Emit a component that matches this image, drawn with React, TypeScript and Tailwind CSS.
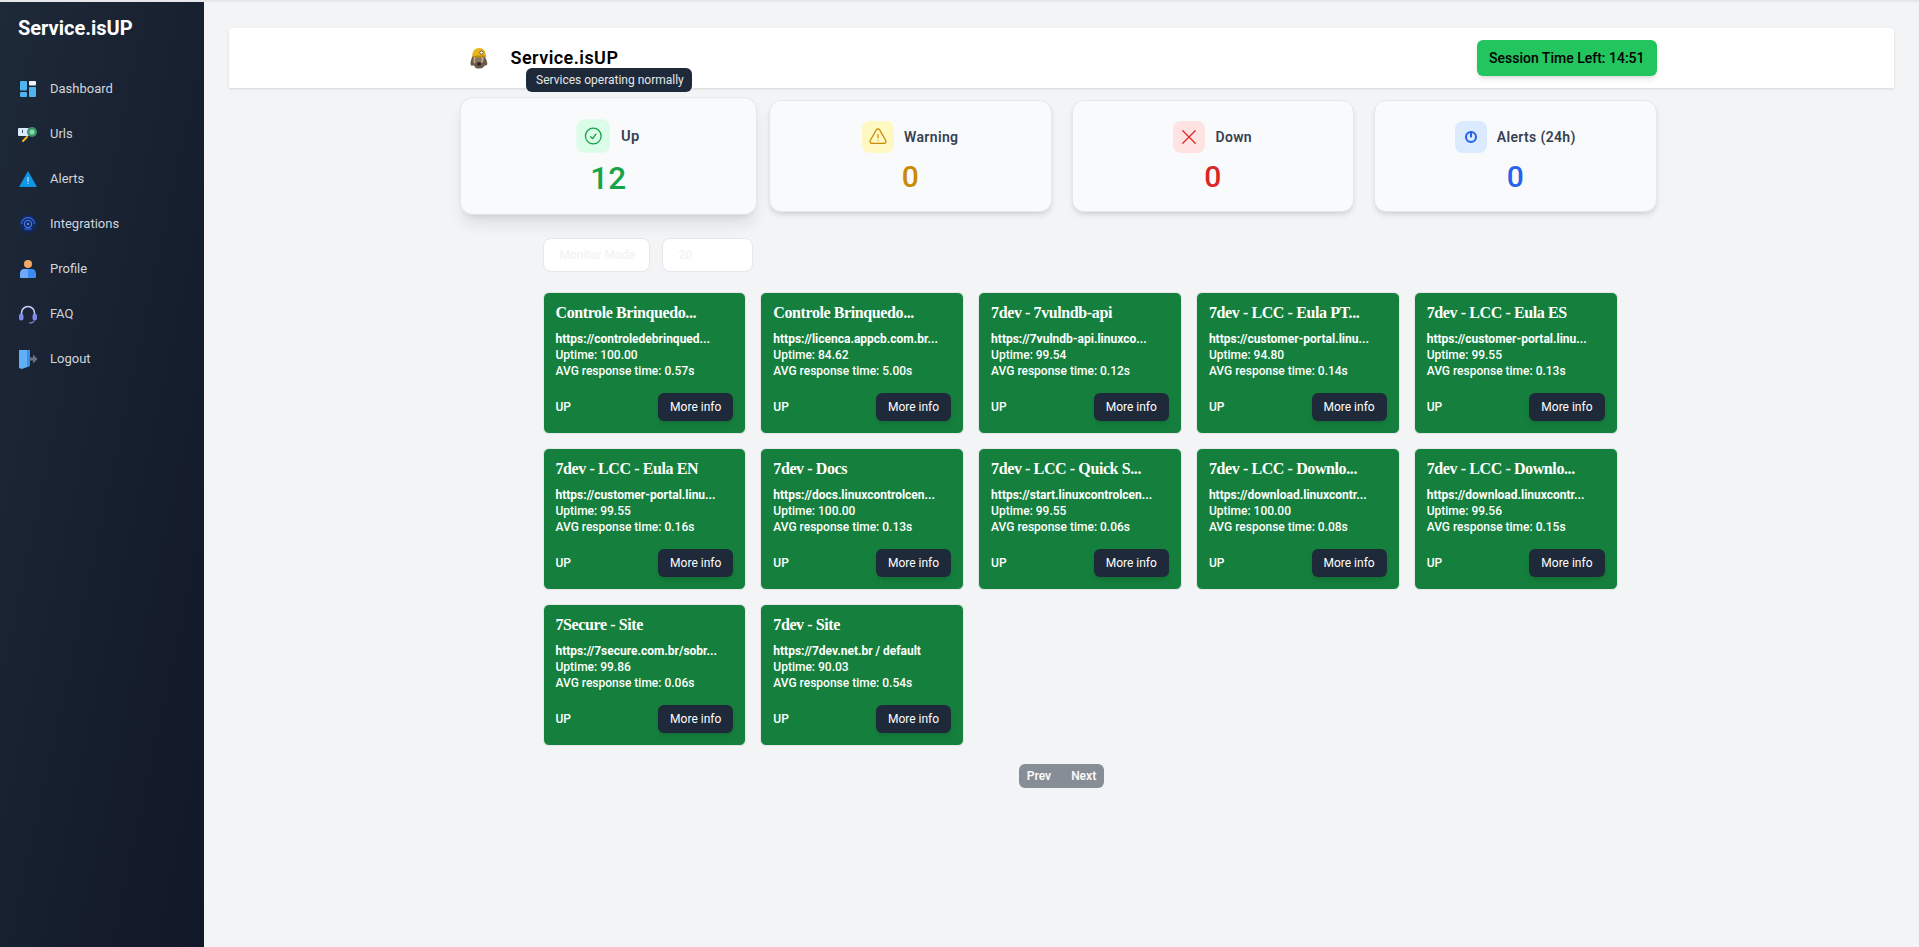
const navItems = [
  { label: "Dashboard", icon: <DashboardIcon /> },
  { label: "Urls", icon: <UrlsIcon /> },
  { label: "Alerts", icon: <AlertsIcon /> },
  { label: "Integrations", icon: <IntegrationsIcon /> },
  { label: "Profile", icon: <ProfileIcon /> },
  { label: "FAQ", icon: <FaqIcon /> },
  { label: "Logout", icon: <LogoutIcon /> },
];

const services = [
  { name: "Controle Brinquedo...", url: "https://controledebrinqued...", uptime: "100.00", avg: "0.57s" },
  { name: "Controle Brinquedo...", url: "https://licenca.appcb.com.br...", uptime: "84.62", avg: "5.00s" },
  { name: "7dev - 7vulndb-api", url: "https://7vulndb-api.linuxco...", uptime: "99.54", avg: "0.12s" },
  { name: "7dev - LCC - Eula PT...", url: "https://customer-portal.linu...", uptime: "94.80", avg: "0.14s" },
  { name: "7dev - LCC - Eula ES", url: "https://customer-portal.linu...", uptime: "99.55", avg: "0.13s" },
  { name: "7dev - LCC - Eula EN", url: "https://customer-portal.linu...", uptime: "99.55", avg: "0.16s" },
  { name: "7dev - Docs", url: "https://docs.linuxcontrolcen...", uptime: "100.00", avg: "0.13s" },
  { name: "7dev - LCC - Quick S...", url: "https://start.linuxcontrolcen...", uptime: "99.55", avg: "0.06s" },
  { name: "7dev - LCC - Downlo...", url: "https://download.linuxcontr...", uptime: "100.00", avg: "0.08s" },
  { name: "7dev - LCC - Downlo...", url: "https://download.linuxcontr...", uptime: "99.56", avg: "0.15s" },
  { name: "7Secure - Site", url: "https://7secure.com.br/sobr...", uptime: "99.86", avg: "0.06s" },
  { name: "7dev - Site", url: "https://7dev.net.br / default", uptime: "90.03", avg: "0.54s" },
];

function DashboardIcon() {
  return (
    <svg viewBox="0 0 20 20" className="w-5 h-5">
      <rect x="2" y="2" width="7" height="9.5" rx="1" fill="#4fb3f0" />
      <rect x="2" y="13" width="7" height="5" rx="1" fill="#4fb3f0" />
      <rect x="11" y="2" width="7" height="4.5" rx="1" fill="#f1f5f9" />
      <rect x="11" y="8" width="7" height="10" rx="1" fill="#4fb3f0" />
    </svg>
  );
}

function UrlsIcon() {
  return (
    <svg viewBox="0 0 20 20" className="w-5 h-5">
      <rect x="0" y="4" width="11" height="8" rx="1" fill="#dbeafe" />
      <rect x="4" y="6" width="1" height="3" fill="#475569" />
      <path d="M9 13l-4 4" stroke="#f5b82e" strokeWidth="2" strokeLinecap="round" />
      <circle cx="14" cy="8" r="5" fill="#3f8f6b" />
      <circle cx="14" cy="8" r="2.6" fill="#7ee0a8" />
    </svg>
  );
}

function AlertsIcon() {
  return (
    <svg viewBox="0 0 20 20" className="w-5 h-5">
      <path d="M10 2L18.5 17a.6.6 0 01-.5 1H2a.6.6 0 01-.5-1z" fill="#0f94e6" />
      <rect x="9.5" y="8" width="1" height="5" fill="#e0f2fe" />
      <rect x="9.5" y="14" width="1" height="1" fill="#e0f2fe" />
    </svg>
  );
}

function IntegrationsIcon() {
  return (
    <svg viewBox="0 0 20 20" className="w-5 h-5" fill="none">
      <circle cx="10" cy="10" r="9" fill="#13295c" />
      <path d="M3.5 10a6.5 6.5 0 0113 0" stroke="#2f62d8" strokeWidth="1.4" />
      <circle cx="10" cy="10" r="3.6" stroke="#3f78ee" strokeWidth="1.3" />
      <path d="M6.5 15h7" stroke="#2f62d8" strokeWidth="1.4" />
      <circle cx="10" cy="10" r="1.2" fill="#5b8ff5" />
    </svg>
  );
}

function ProfileIcon() {
  return (
    <svg viewBox="0 0 20 20" className="w-5 h-5">
      <circle cx="10" cy="5" r="4" fill="#f4a96b" />
      <path d="M2 18v-3.5C2 12 4 10 6 10h8c2 0 4 2 4 4.5V18a1 1 0 01-1 1H3a1 1 0 01-1-1z" fill="#3b8bf5" />
      <path d="M2 18v-3.5C2 12 4 10 6 10h4v9H3a1 1 0 01-1-1z" fill="#6ea8f7" />
    </svg>
  );
}

function FaqIcon() {
  return (
    <svg viewBox="0 0 20 20" className="w-5 h-5" fill="none">
      <path d="M3.5 11V9a6.5 6.5 0 0113 0v2" stroke="#c7d2fe" strokeWidth="1.5" />
      <rect x="1" y="9.5" width="4.5" height="7" rx="2.2" fill="#7c8ce8" />
      <rect x="14.5" y="9.5" width="4.5" height="7" rx="2.2" fill="#7c8ce8" />
      <path d="M16 16.5c0 1.5-2.5 2.5-5 2.5" stroke="#7c8ce8" strokeWidth="1.2" />
    </svg>
  );
}

function LogoutIcon() {
  return (
    <svg viewBox="0 0 20 20" className="w-5 h-5">
      <path d="M1 1h11v16l-8 3-3-1z" fill="#5fb0f7" />
      <path d="M9 1h3v16H9z" fill="#3f8fe8" />
      <path d="M11 8.5h4V5.5l4.5 4.5-4.5 4.5v-3h-4z" fill="#64748b" />
    </svg>
  );
}

function DogLogo() {
  return (
    <svg viewBox="0 0 24 26" className="w-5 h-6">
      <path d="M4 11c-1 4-3 7-2 10 1 2 3 1 4 1l2 3c3 1 7 1 9-1l2-2c1 0 3 0 3-2 0-3-2-6-3-9z" fill="#6b5744" />
      <path d="M6 11c-1 4-1 7 0 9l2-1c-1-3 0-5 1-8zM14 11c1 3 1 5 0 7l2 1c2-3 2-5 1-8z" fill="#b8a48a" />
      <path d="M9 11c-1 3-1 5 0 8h5c1-3 1-5 0-8z" fill="#8a7560" />
      <path d="M10 18h4v4h-4z" fill="#2b2420" />
      <path d="M4 12C3 6 7 1 12 1s9 4 8 10c-1 1-2 1-3 1H6c-1 0-2 0-2 0z" fill="#e8b51f" />
      <path d="M4 11c5-1 11-1 16-1v2H4z" fill="#b98a12" />
      <circle cx="15" cy="6.5" r="2" fill="#f8fafc" stroke="#3b3320" strokeWidth="0.8" />
    </svg>
  );
}

function CheckIcon() {
  return (
    <svg viewBox="0 0 24 24" fill="none" stroke="currentColor" strokeWidth="1.5" strokeLinecap="round" strokeLinejoin="round" className="w-5 h-5 text-[#16a34a]">
      <path d="M9 12.75L11.25 15 15 9.75M21 12a9 9 0 11-18 0 9 9 0 0118 0z" />
    </svg>
  );
}

function WarnIcon() {
  return (
    <svg viewBox="0 0 24 24" fill="none" stroke="currentColor" strokeWidth="1.5" strokeLinecap="round" strokeLinejoin="round" className="w-5 h-5 text-[#ca8a04]">
      <path d="M12 9v3.75m-9.303 3.376c-.866 1.5.217 3.374 1.948 3.374h14.71c1.73 0 2.813-1.874 1.948-3.374L13.949 3.378c-.866-1.5-3.032-1.5-3.898 0L2.697 16.126zM12 15.75h.007v.008H12v-.008z" />
    </svg>
  );
}

function CrossIcon() {
  return (
    <svg viewBox="0 0 24 24" fill="none" stroke="currentColor" strokeWidth="1.5" strokeLinecap="round" className="w-5 h-5 text-[#dc2626]">
      <path d="M4.5 4.5l15 15M19.5 4.5l-15 15" />
    </svg>
  );
}

function AlertCountIcon() {
  return (
    <svg viewBox="0 0 24 24" fill="none" stroke="currentColor" strokeWidth="2.5" strokeLinecap="round" className="w-5 h-5 text-[#2563eb]">
      <circle cx="12" cy="12" r="6" />
      <path d="M12 6.5v5" />
    </svg>
  );
}

function StatCard({ icon, label, value, iconBg, valueColor, active }: any) {
  return (
    <div className={`flex flex-col items-center gap-1.5 rounded-xl border border-gray-200 bg-gray-50 pt-5 pb-4 ${active ? "scale-105 shadow-lg" : "shadow-md"}`}>
      <div className="flex items-center gap-2.5">
        <div className={`rounded-lg p-1.5 ${iconBg}`}>{icon}</div>
        <span className="text-sm font-semibold tracking-wide text-gray-700">{label}</span>
      </div>
      <div className={`text-3xl font-medium ${valueColor}`}>{value}</div>
    </div>
  );
}

function ServiceCard({ service }: any) {
  return (
    <div className="rounded-md border border-gray-200 bg-[#15803d] p-3 text-xs text-white">
      <div className="mb-2.5 font-['Liberation_Serif',serif] text-base leading-4 font-bold tracking-tight whitespace-nowrap">{service.name}</div>
      <div className="font-bold whitespace-nowrap">{service.url}</div>
      <div className="font-medium">Uptime: {service.uptime}</div>
      <div className="font-medium">AVG response time: {service.avg}</div>
      <div className="mt-3.5 flex items-center justify-between">
        <span className="font-medium">UP</span>
        <button className="rounded-md bg-gray-800 px-3 py-1.5 text-xs shadow-md">More info</button>
      </div>
    </div>
  );
}

export default function App() {
  return (
    <div className="flex h-screen overflow-hidden border-t-2 border-gray-200 bg-gray-100 font-['Roboto',sans-serif]">
      <aside className="flex w-[204px] shrink-0 flex-col bg-gradient-to-br from-gray-800 to-[#111827] pt-3">
        <div className="px-[18px] text-xl font-bold text-white">Service.isUP</div>
        <nav className="mt-6 flex flex-col">
          {navItems.map((item) => (
            <a key={item.label} className="flex h-[45px] items-center gap-3 px-[18px] text-[13px] text-gray-300">
              {item.icon}
              {item.label}
            </a>
          ))}
        </nav>
      </aside>

      <main className="flex-1 px-[25px] pt-6.5">
        <header className="relative flex h-[60px] justify-center rounded-t-sm bg-white shadow-sm">
          <div className="flex w-[1190px] items-center justify-between">
            <div className="flex items-center gap-5.5 pl-0.5">
              <DogLogo />
              <span className="text-lg font-semibold tracking-wide text-black">Service.isUP</span>
            </div>
            <div className="rounded-md bg-[#22c55e] px-3 py-2 text-sm font-medium text-black shadow-md">Session Time Left: 14:51</div>
          </div>
          <div className="absolute top-10 left-[297px] z-10 rounded-md bg-gray-800 py-1 pr-2 pl-2.5 text-xs text-gray-200">Services operating normally</div>
        </header>

        <div className="mx-auto w-[1190px]">
          <div className="mt-3 grid grid-cols-4 gap-5">
            <StatCard active icon={<CheckIcon />} label="Up" value="12" iconBg="bg-green-100" valueColor="text-[#16a34a]" />
            <StatCard icon={<WarnIcon />} label="Warning" value="0" iconBg="bg-yellow-100" valueColor="text-[#ca8a04]" />
            <StatCard icon={<CrossIcon />} label="Down" value="0" iconBg="bg-red-100" valueColor="text-[#dc2626]" />
            <StatCard icon={<AlertCountIcon />} label="Alerts (24h)" value="0" iconBg="bg-blue-100" valueColor="text-[#2563eb]" />
          </div>

          <div className="mt-6.5 ml-[76px] w-[1075px]">
            <div className="flex gap-3 text-xs font-semibold text-gray-100">
              <div className="flex h-[34px] w-[107px] items-center rounded-lg border border-gray-200 bg-white px-4 whitespace-nowrap">Monitor Mode</div>
              <div className="flex h-[34px] w-[91px] items-center rounded-lg border border-gray-200 bg-white px-4">20</div>
            </div>
            <div className="mt-5 grid grid-cols-5 gap-3.5">
              {services.map((service, i) => (
                <ServiceCard key={i} service={service} />
              ))}
            </div>
          </div>

          <div className="mt-4.5 flex justify-center">
            <div className="flex rounded-md bg-gray-800 text-xs font-semibold text-white opacity-50">
              <button className="py-1 pr-2.5 pl-2">Prev</button>
              <button className="py-1 pr-2 pl-2.5">Next</button>
            </div>
          </div>
        </div>
      </main>
    </div>
  );
}
